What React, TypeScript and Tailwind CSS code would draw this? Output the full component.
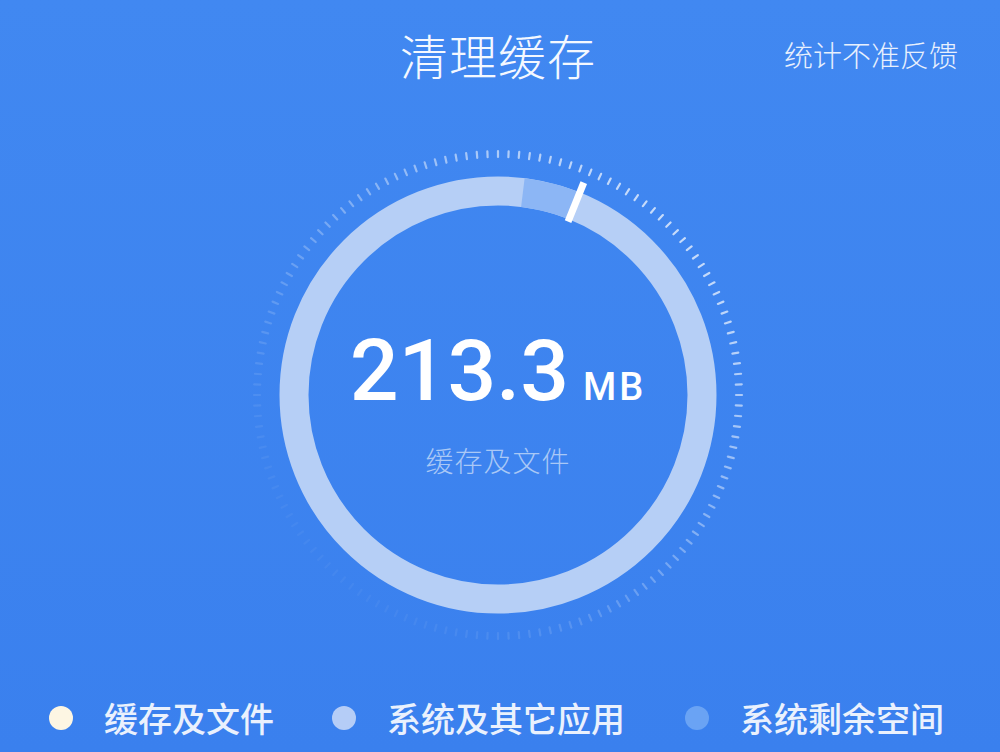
import React from 'react';

const CX = 260;
const CY = 260;

function pt(r: number, deg: number) {
  const a = (deg * Math.PI) / 180;
  return { x: CX + r * Math.sin(a), y: CY - r * Math.cos(a) };
}

function arc(r: number, from: number, to: number) {
  const a = pt(r, from);
  const b = pt(r, to);
  const large = to - from > 180 ? 1 : 0;
  return `M ${a.x} ${a.y} A ${r} ${r} 0 ${large} 1 ${b.x} ${b.y}`;
}

const TICKS = Array.from({ length: 144 }, (_, i) => i * 2.5);

function Gauge() {
  const t1 = pt(187, 22);
  const t2 = pt(229, 22);
  return (
    <svg width="520" height="520" viewBox="0 0 520 520">
      {/* dotted outer scale, bright top-right, fading bottom-left */}
      {TICKS.map((deg) => {
        const a = pt(238, deg);
        const b = pt(244, deg);
        const d = ((deg - 45) * Math.PI) / 180;
        const op = 0.05 + 0.85 * Math.pow((1 + Math.cos(d)) / 2, 1.4);
        return (
          <line
            key={deg}
            x1={a.x}
            y1={a.y}
            x2={b.x}
            y2={b.y}
            stroke="#d6e5fc"
            strokeWidth={2.2}
            strokeLinecap="round"
            opacity={op}
          />
        );
      })}
      <circle cx={CX} cy={CY} r={204} fill="none" stroke="#b6cff6" strokeWidth={29} />
      <path d={arc(204, 7, 22)} fill="none" stroke="#8cb6f5" strokeWidth={29} />
      <line x1={t1.x} y1={t1.y} x2={t2.x} y2={t2.y} stroke="#ffffff" strokeWidth={7} />
    </svg>
  );
}

const legend = [
  { label: '缓存及文件', color: 'bg-[#fdf6e3]' },
  { label: '系统及其它应用', color: 'bg-[#b5cdf7]' },
  { label: '系统剩余空间', color: 'bg-[#6aa3f4]' },
];

export default function App() {
  return (
    <div
      className="w-[1000px] h-[752px] overflow-hidden flex flex-col bg-gradient-to-b from-[#4188f1] to-[#3a80ee] text-white"
      style={{ fontFamily: '"Noto Sans CJK SC", "Noto Sans", sans-serif' }}
    >
      <header className="h-[108px] grid grid-cols-[1fr_auto_1fr] items-center">
        <div />
        <h1 className="text-[48px] font-light tracking-[1px] text-[#f4f8ff] leading-none -ml-[4px]">清理缓存</h1>
        <div className="flex justify-end pr-[42px]">
          <span className="text-[29px] font-light text-[#e8f0fd] leading-none">统计不准反馈</span>
        </div>
      </header>

      <div className="mt-[27px] flex justify-center pr-[4px]">
        <div className="relative w-[520px] h-[520px]">
          <Gauge />
          <div className="absolute inset-0 flex flex-col items-center">
            <div
              className="mt-[193px] flex items-baseline gap-[14px]"
              style={{ fontFamily: 'Roboto, "Liberation Sans", sans-serif' }}
            >
              <span className="text-[86px] font-medium leading-none text-white">213.3</span>
              <span className="text-[38px] font-medium leading-none text-white tracking-[3px]">MB</span>
            </div>
            <div className="mt-[32px] text-[28px] font-light text-[#a9c8f6] tracking-[1px] leading-none">缓存及文件</div>
          </div>
        </div>
      </div>

      <div className="mt-[46px] flex items-center pl-[49px]">
        {legend.map((l, i) => (
          <div
            key={l.label}
            className={`flex items-center gap-[31px] ${i === 0 ? 'w-[283px]' : i === 1 ? 'w-[353px]' : ''}`}
          >
            <span className={`w-[24px] h-[24px] rounded-full ${l.color}`} />
            <span className="text-[34px] font-medium text-[#eaf1fd] leading-none">{l.label}</span>
          </div>
        ))}
      </div>
    </div>
  );
}
